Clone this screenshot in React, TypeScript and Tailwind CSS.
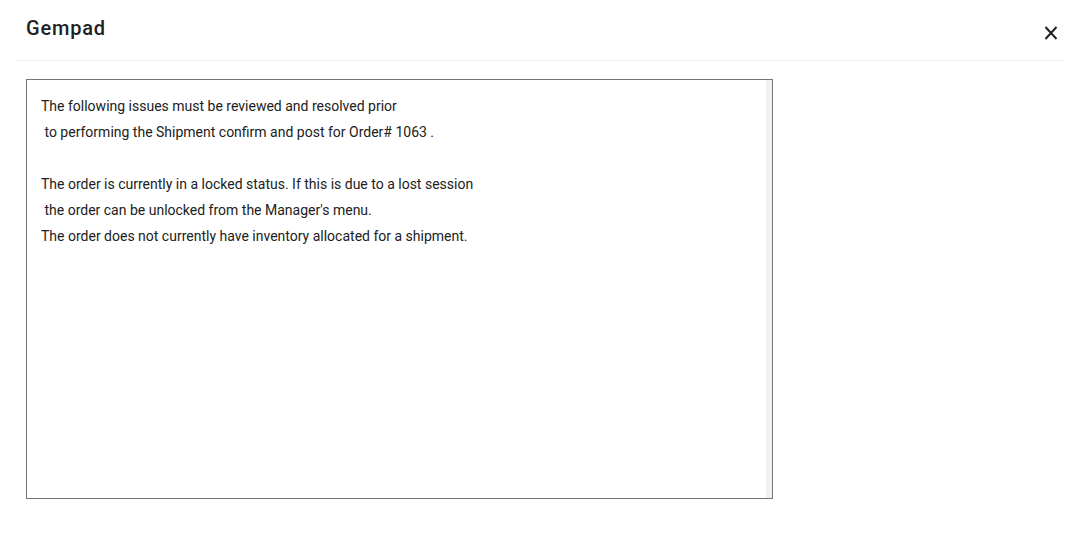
export default function App() {
  const text = `The following issues must be reviewed and resolved prior
 to performing the Shipment confirm and post for Order# 1063 .

The order is currently in a locked status. If this is due to a lost session
 the order can be unlocked from the Manager's menu.
The order does not currently have inventory allocated for a shipment.`;

  return (
    <div className="h-[550px] w-[1081px] bg-white px-4" style={{ fontFamily: 'Roboto, "Liberation Sans", sans-serif' }}>
      <div className="flex h-[61px] items-start justify-between border-b border-[#f5eff0] pl-[10px] pr-[4px]">
        <h1 className="pt-[15px] text-[20px] font-medium leading-[26px] tracking-[0.8px] text-[#212121]">Gempad</h1>
        <button className="mt-[23px] flex h-5 w-5 items-center justify-center text-[#212121]">
          <svg width="16" height="16" viewBox="0 0 16 16" fill="none" stroke="currentColor" strokeWidth="2">
            <path d="M2.5 2L13.5 14M13.5 2L2.5 14" />
          </svg>
        </button>
      </div>
      <div className="ml-[10px] mt-[18px] flex h-[420px] w-[747px] border border-[#757575]">
        <div className="flex-1 whitespace-pre pl-[14px] pt-[13px] text-[14px] leading-[26px] text-[#212121]">{text}</div>
        <div className="w-[6px] bg-[#f1f1f1]" />
      </div>
    </div>
  );
}
